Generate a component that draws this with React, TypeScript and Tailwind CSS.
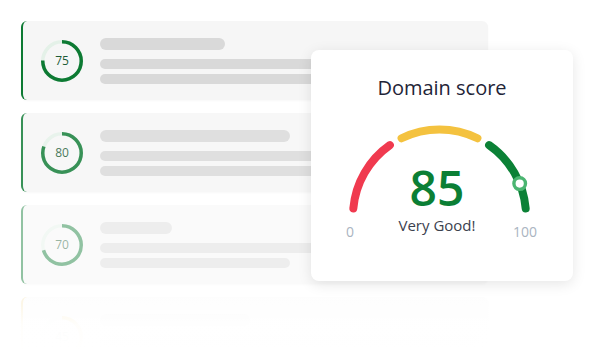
import React from "react";

type Row = {
  score: number;
  color: string;
  opacity: string;
  bars: number[];
};

const rows: Row[] = [
  { score: 75, color: "#0d7a33", opacity: "opacity-100", bars: [125, 380, 380] },
  { score: 80, color: "#0d7a33", opacity: "opacity-[0.82]", bars: [190, 380, 380] },
  { score: 70, color: "#0d7a33", opacity: "opacity-[0.45]", bars: [72, 380, 190] },
  { score: 45, color: "#e9b21f", opacity: "opacity-[0.18]", bars: [150, 380, 380] },
];

const Ring = ({ score, color }: { score: number; color: string }) => {
  const r = 19.25;
  const c = 2 * Math.PI * r;
  return (
    <div className="relative w-[46px] h-[46px] shrink-0">
      <svg width="46" height="46" viewBox="0 0 46 46">
        <circle cx="23" cy="23" r={r} fill="none" stroke="#e4f1e8" strokeWidth="3.5" />
        <circle
          cx="23"
          cy="23"
          r={r}
          fill="none"
          stroke={color}
          strokeWidth="3.5"
          strokeDasharray={`${(c * score) / 100} ${c}`}
          transform="rotate(-90 23 23)"
        />
      </svg>
      <div className="absolute inset-0 flex items-center justify-center text-[12px] text-[#1d5c37]">
        {score}
      </div>
    </div>
  );
};

const ListCard = ({ row }: { row: Row }) => {
  return (
    <div
      className={`w-[467px] h-[79px] shrink-0 rounded-md border-l-2 bg-[#f6f6f6] flex items-center pl-[16px] gap-[15px] shadow-[0_1px_2px_rgba(0,0,0,0.03)] ${row.opacity}`}
      style={{ borderLeftColor: row.color }}
    >
      <Ring score={row.score} color={row.color} />
      <div className="flex flex-col">
        <div className="h-3 rounded-full bg-[#d9d9d9]" style={{ width: row.bars[0] }} />
        <div className="h-2.5 mt-[9px] rounded-full bg-[#d9d9d9]" style={{ width: row.bars[1] }} />
        <div className="h-2.5 mt-[5px] rounded-full bg-[#d9d9d9]" style={{ width: row.bars[2] }} />
      </div>
    </div>
  );
};

const cx = 128.5;
const cy = 96;
const R = 86.5;

const pt = (deg: number) => {
  const a = (deg * Math.PI) / 180;
  return { x: cx + R * Math.cos(a), y: cy - R * Math.sin(a) };
};

const arc = (a0: number, a1: number) => {
  const p0 = pt(a0);
  const p1 = pt(a1);
  return `M ${p0.x} ${p0.y} A ${R} ${R} 0 0 1 ${p1.x} ${p1.y}`;
};

const Gauge = () => {
  const knob = pt(22);
  return (
    <div className="relative h-[125px] mt-[18px]">
      <svg width="262" height="125" viewBox="0 0 262 125">
        <path d={arc(175, 125)} fill="none" stroke="#f03a4f" strokeWidth="8" strokeLinecap="round" />
        <path d={arc(116, 64)} fill="none" stroke="#f4c23f" strokeWidth="8" strokeLinecap="round" />
        <path d={arc(55, 5)} fill="none" stroke="#0b8136" strokeWidth="8" strokeLinecap="round" />
        <circle cx={knob.x} cy={knob.y} r="5.8" fill="#fff" stroke="#4bb571" strokeWidth="3.4" />
        <text x="39" y="117" textAnchor="middle" fontSize="14" fill="#aab4c1" fontFamily="Open Sans">
          0
        </text>
        <text x="214" y="117" textAnchor="middle" fontSize="14" fill="#aab4c1" fontFamily="Open Sans">
          100
        </text>
      </svg>
      <div className="absolute left-0 top-[46px] w-[252px] flex flex-col items-center">
        <div className="text-[48px] leading-[44px] font-semibold text-[#0b7f35]">85</div>
        <div className="mt-[5px] text-[15px] leading-[20px] font-medium text-[#3b414e]">Very Good!</div>
      </div>
    </div>
  );
};

export default function App() {
  return (
    <div className="relative w-[600px] h-[350px] overflow-hidden bg-white font-['Open_Sans',sans-serif]">
      <div className="flex flex-col gap-[13px] pl-[21px] pt-[21px]">
        {rows.map((row) => (
          <ListCard key={row.score} row={row} />
        ))}
      </div>
      <div className="absolute left-0 right-0 bottom-0 h-[52px] bg-linear-to-b from-white/30 via-white/90 to-white" />

      <div className="absolute left-[311px] top-[50px] w-[262px] h-[231px] rounded-lg bg-white shadow-[0_3px_14px_rgba(0,0,0,0.1)]">
        <div className="pt-[24px] text-center text-[20px] leading-[28px] font-medium text-[#1f2538]">
          Domain score
        </div>
        <Gauge />
      </div>
    </div>
  );
}
